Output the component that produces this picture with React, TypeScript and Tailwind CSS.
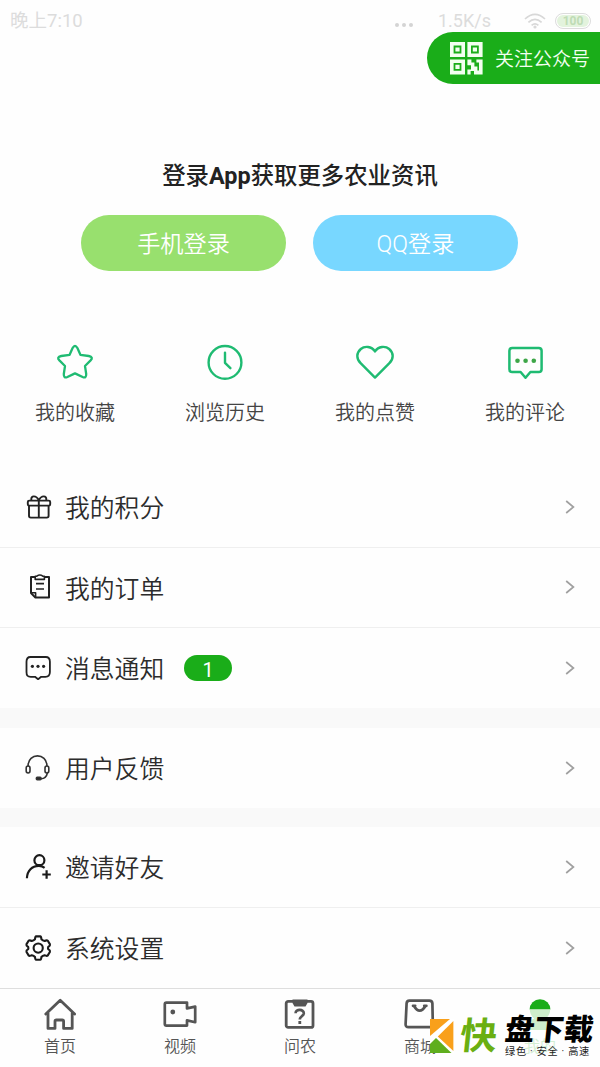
import type { ReactNode } from "react";

const StarIcon = () => (
  <svg viewBox="0 0 40 40" className="w-10 h-10" fill="none" stroke="#1fbb72" strokeWidth={2.3} strokeLinejoin="round">
    <path d="M17.6 6Q20 1.8 22.4 6L25.4 12.8L33.8 14Q38.8 15 35.6 18.4L30 24L31.2 32Q31.4 36.6 27.6 35L20 31.4L12.4 35Q8.6 36.6 8.8 32L10 24L4.4 18.4Q1.2 15 6.2 14L14.6 12.8Z" />
  </svg>
);

const ClockIcon = () => (
  <svg viewBox="0 0 40 40" className="w-10 h-10" fill="none" stroke="#1fbb72" strokeWidth={2.4} strokeLinecap="round">
    <circle cx="20" cy="20.4" r="16.4" />
    <path d="M20 10.6V20.8L25.4 26.2" strokeLinejoin="round" />
  </svg>
);

const HeartIcon = () => (
  <svg viewBox="0 0 40 40" className="w-10 h-10" fill="none" stroke="#1fbb72" strokeWidth={2.4} strokeLinejoin="round">
    <path d="M20 9.4C16.6 4 9.6 3.7 5.8 7C1.2 11 1.2 16.8 5.6 21.2L20 35.6L34.4 21.2C38.8 16.8 38.8 11 34.2 7C30.4 3.7 23.4 4 20 9.4Z" />
  </svg>
);

const CommentIcon = () => (
  <svg viewBox="0 0 40 40" className="w-10 h-10" fill="none" stroke="#1fbb72" strokeWidth={2.5} strokeLinejoin="round">
    <path d="M7.2 6H33.8Q36.6 6 36.6 8.8V27.2Q36.6 30 33.8 30H25.4L20.5 35.8L15.6 30H7.2Q4.4 30 4.4 27.2V8.8Q4.4 6 7.2 6Z" />
    <g fill="#3da648" stroke="none">
      <circle cx="12.5" cy="18.8" r="2.3" />
      <circle cx="20.6" cy="18.8" r="2.3" />
      <circle cx="28.8" cy="18.8" r="2.3" />
    </g>
  </svg>
);

const GiftIcon = () => (
  <svg viewBox="0 0 28 28" className="w-7 h-7" fill="none" stroke="#222" strokeWidth={1.9} strokeLinejoin="round">
    <rect x="3.8" y="7.6" width="22.4" height="5" rx="1.4" />
    <path d="M5 12.6V22.8Q5 24.6 6.8 24.6H22.8Q24.6 24.6 24.6 22.8V12.6M14.8 7.6V24.6M14.8 7.4C12.4 2 6.4 2 7.4 7.4M14.8 7.4C17.2 2 23.2 2 22.2 7.4" />
  </svg>
);

const OrderIcon = () => (
  <svg viewBox="0 0 28 28" className="w-7 h-7" fill="none" stroke="#222" strokeWidth={2} strokeLinejoin="round">
    <path d="M11 4H7V20L11.4 24.6H25V4H20.6" />
    <path d="M11.2 3.2H12.8Q15.8 .9 18.8 3.2H20.4V6.4H11.2Z" strokeWidth={1.6} />
    <path d="M7 19.8H11.6V24.6M12 10.6H20M12 16H20" strokeWidth={1.6} />
  </svg>
);

const MessageIcon = () => (
  <svg viewBox="0 0 28 28" className="w-7 h-7" fill="none" stroke="#222" strokeWidth={1.8} strokeLinejoin="round">
    <path d="M6.4 3H21.8C24.8 3 25.9 4.8 25.9 7.8V18C25.9 21.6 24.6 22.8 21.4 22.8H17.2L14.1 25.2L11 22.8H6.8C3.6 22.8 2.5 21.6 2.5 18V7.8C2.5 4.8 3.4 3 6.4 3Z" />
    <g fill="#222" stroke="none">
      <circle cx="8.4" cy="12.3" r="1.6" />
      <circle cx="14" cy="12.3" r="1.6" />
      <circle cx="19.6" cy="12.3" r="1.6" />
    </g>
  </svg>
);

const HeadsetIcon = () => (
  <svg viewBox="0 0 28 28" className="w-7 h-7" fill="none" stroke="#333" strokeWidth={1.6}>
    <path d="M4 12.2C4.2 -1.6 22.8 -1.6 23 12.2M23.4 18.8Q22.4 24.4 17 24.8" />
    <rect x="2.2" y="12" width="3.8" height="7" rx="1.9" />
    <rect x="21" y="12" width="3.8" height="7" rx="1.9" />
    <rect x="12.4" y="23.4" width="4.6" height="2.2" rx=".8" fill="#222" />
  </svg>
);

const InviteIcon = () => (
  <svg viewBox="0 0 28 28" className="w-7 h-7" fill="none" stroke="#1a1a1a" strokeWidth={2.2}>
    <circle cx="15.4" cy="7.2" r="5" />
    <path d="M2.9 25.2C3.2 17.6 8 12.8 15 12.9Q18.2 13 20.6 14.8M22.6 17.2V25.8M18.3 21.5H26.8" />
  </svg>
);

const GearIcon = () => (
  <svg viewBox="0 0 28 28" className="w-7 h-7" fill="none" stroke="#1a1a1a" strokeWidth={2.1} strokeLinejoin="round">
    <path d="M12.2 2.4H16.2Q17.2 2.6 17.4 5.2Q18.8 6.6 20.6 7Q22.8 5.8 23.8 6.8L26 10.4Q26.4 11.6 24.2 13Q23.8 14.2 24.2 15.2Q26.4 16.6 26 17.8L23.8 21.4Q22.8 22.4 20.6 21.2Q18.6 21.6 17.4 23Q17.2 25.6 16.2 25.8H12.2Q11.2 25.6 11 23Q9.8 21.6 7.8 21.2Q5.6 22.4 4.6 21.4L2.4 17.8Q2 16.6 4.2 15.2Q4.6 14.2 4.2 13Q2 11.6 2.4 10.4L4.6 6.8Q5.6 5.8 7.8 7Q9.6 6.6 11 5.2Q11.2 2.6 12.2 2.4Z" />
    <circle cx="14.2" cy="14.1" r="4.6" />
  </svg>
);

const QrIcon = () => (
  <svg viewBox="0 0 33 33" className="w-[33px] h-[33px]" fill="#f3fff0">
    <path fillRule="evenodd" d="M0 0H15V15H0ZM3.6 3.6V11.4H11.4V3.6ZM17.4 0H32.6V15H17.4ZM21 3.6V11.4H28.8V3.6ZM0 17.4H15V32.4H0ZM3.6 21V28.8H11.4V21Z" />
    <path d="M5.4 5.4H9.6V9.6H5.4ZM22.8 5.4H27V9.6H22.8ZM5.4 22.8H9.6V27H5.4Z" />
    <path d="M17.4 17.4H21.4V20.4H24.4V24.4H27.4V28.6H29V20.4H26.4V17.4H32.6V32.4H24V29H20.6V32.4H17.4V27.4H21V23.2H17.4Z" />
  </svg>
);

const HomeIcon = () => (
  <svg viewBox="0 0 36 36" className="w-9 h-9" fill="none" stroke="#555" strokeWidth={2.8} strokeLinejoin="round" strokeLinecap="round">
    <path d="M3.8 17L18.2 3.2L32.6 17M6 15.8V31.4H13V24.4Q13 23 14.4 23H20.2Q21.6 23 21.6 24.4V31.4H30.2V15.8" />
  </svg>
);

const VideoIcon = () => (
  <svg viewBox="0 0 36 36" className="w-9 h-9" fill="none" stroke="#555" strokeWidth={2.7} strokeLinejoin="round">
    <path d="M4.4 5.6H25V11.4L33.2 9.6V25.2L25 23.4V28.6H4.4Q2.8 28.6 2.8 27V7.2Q2.8 5.6 4.4 5.6Z" />
    <circle cx="10.8" cy="15" r="2.4" fill="#555" stroke="none" />
  </svg>
);

const AskIcon = () => (
  <svg viewBox="0 0 36 36" className="w-9 h-9" fill="none" stroke="#555" strokeWidth={2.8}>
    <rect x="4.2" y="4.4" width="26.8" height="26" rx="2" />
    <path d="M10.5 2.4H25.5V6L23.5 9.4H12.5L10.5 6Z" fill="#555" stroke="none" />
    <path d="M13.6 16.2C13.6 11.7 22 11.9 21.8 16.4C21.6 19.2 17.8 19.4 17.8 22.4" strokeWidth={2.7} />
    <path d="M17.8 24V27" strokeWidth={2.8} />
  </svg>
);

const ShopIcon = () => (
  <svg viewBox="0 0 36 36" className="w-9 h-9" fill="none" stroke="#555" strokeWidth={2.7} strokeLinecap="round">
    <path d="M7.4 3.6H27.4Q30.2 3.6 30.4 6.4L30.8 27Q31 30.2 27.8 30.2H6.6Q3.4 30.2 3.6 27L4.6 6.4Q4.8 3.6 7.4 3.6Z" />
    <path d="M11.8 8.8Q17.7 18.6 23.6 8.8M11 8.8H13.2M22.2 8.8H24.4" />
  </svg>
);

const MineIcon = () => (
  <svg viewBox="0 0 36 36" className="w-9 h-9">
    <path d="M7.6 12.6A10.4 10.4 0 0 1 28.4 12.6Z" fill="#1aad19" />
    <path d="M7.8 12.6H28.2Q28 18.4 23.8 21.4L29.6 24.4V33H6.4V24.4L12.2 21.4Q8 18.4 7.8 12.6Z" fill="#cdeecb" />
  </svg>
);

const Chevron = () => (
  <svg viewBox="0 0 10 14" className="w-[10px] h-[14px]" fill="none" stroke="#a0a0a0" strokeWidth={1.7}>
    <path d="M1.2 1L8.4 7L1.2 13" />
  </svg>
);

const shortcuts = [
  { label: "我的收藏", icon: <StarIcon /> },
  { label: "浏览历史", icon: <ClockIcon /> },
  { label: "我的点赞", icon: <HeartIcon /> },
  { label: "我的评论", icon: <CommentIcon /> },
];

const tabs = [
  { label: "首页", icon: <HomeIcon /> },
  { label: "视频", icon: <VideoIcon /> },
  { label: "问农", icon: <AskIcon /> },
  { label: "商城", icon: <ShopIcon /> },
];

type RowProps = { icon: ReactNode; label: string; badge?: string; line?: boolean };

const Row = ({ icon, label, badge, line }: RowProps) => (
  <a href="#" className={`flex items-center h-[80.3px] pl-6 pr-[25px] ${line ? "border-b border-[#efefef]" : ""}`}>
    {icon}
    <span className="ml-[13px] pt-[5px] text-[24.8px] leading-none font-[350] text-[#2c2c2c]">{label}</span>
    {badge && (
      <span className="ml-5 flex items-center justify-center w-12 h-[26px] pt-[3px] rounded-full bg-[#1aad19] text-[20px] leading-none text-white">{badge}</span>
    )}
    <span className="ml-auto"><Chevron /></span>
  </a>
);

const Watermark = () => (
  <div className="absolute left-[430px] top-[1016px] flex w-[170px] h-10">
    <svg viewBox="0 0 24 36" className="w-6 h-9 mt-[3px] shrink-0">
      <path d="M0 0H24V34H0Z" fill="#fff" />
      <path d="M0 0H20L0 17Z" fill="#f9a01b" />
      <path d="M23.4 2V32L7.8 17.4Z" fill="#f9a01b" />
      <path d="M6 19L21.5 34H0V25Z" fill="#5fae1e" />
    </svg>
    <span className="ml-[6px] mt-px -skew-x-6 text-[37px] leading-[40px] font-bold text-[#6aaf12]">快</span>
    <div className="ml-[8px] flex flex-col">
      <span className="mt-px -skew-x-6 whitespace-nowrap text-[29.5px] leading-[27px] font-black text-black">盘下载</span>
      <span className="mt-[2px] whitespace-nowrap text-[10.2px] leading-[11px] tracking-[0.7px] text-[#222]">绿色 · 安全 · 高速</span>
    </div>
  </div>
);

export default function App() {
  return (
    <div className="relative flex flex-col w-[600px] h-[1067px] overflow-hidden bg-[#fefefe] font-[Roboto,'Noto_Sans_CJK_SC',sans-serif]">
      {/* Status bar */}
      <header className="flex items-center h-8 pt-[10px] pl-[10px] pr-[9px] text-[18.5px] leading-none text-[#dcdcdc]">
        <span>晚上7:10</span>
        <svg viewBox="0 0 18 4" className="ml-auto mt-[7px] w-[18px] h-1" fill="#d4d4d4">
          <circle cx="2" cy="2" r="2" />
          <circle cx="9" cy="2" r="2" />
          <circle cx="16" cy="2" r="2" />
        </svg>
        <span className="ml-[25px] w-[53px] whitespace-nowrap text-[18px]">1.5K/s</span>
        <svg viewBox="0 0 22 16" className="ml-[33px] w-[22px] h-4" fill="none" stroke="#d8d8d8" strokeWidth={1.7}>
          <path d="M1 6Q11 -3.4 21 6M4.4 9.4Q11 3.2 17.6 9.4M7.6 12.4Q11 9.2 14.4 12.4" />
          <circle cx="11" cy="14" r="1.6" fill="#d8d8d8" stroke="none" />
        </svg>
        <span className="ml-[9px] -mt-px flex items-center justify-center w-[36px] h-4 rounded-full border border-[#dcdcdc] p-px">
          <span className="flex items-center justify-center w-full h-full rounded-full bg-[#e3f3dd] text-[12px] font-bold text-[#bfdcb5]">100</span>
        </span>
      </header>

      <a href="#" className="flex items-center self-end w-[173px] h-[52px] pl-[23px] rounded-l-full bg-[#1aad19] text-[19px] leading-none text-[#f3fff0]">
        <QrIcon />
        <span className="ml-3 pt-[2px] whitespace-nowrap font-[350]">关注公众号</span>
      </a>

      {/* Login */}
      <section className="flex flex-col items-center pt-[76px]">
        <h1 className="h-[30px] pt-px text-[23.4px] leading-[30px] font-medium text-[#222]">
          登录<span className="font-bold">App</span>获取更多农业资讯
        </h1>
        <div className="flex gap-[27px] mt-[25px] mr-px">
          <button className="w-[205px] h-14 pt-[2px] rounded-full bg-[#98e06e] text-[23.2px] font-[350] text-white">手机登录</button>
          <button className="w-[205px] h-14 pt-[2px] rounded-full bg-[#78d7ff] text-[23.2px] font-[350] text-white">QQ登录</button>
        </div>
      </section>

      <nav className="grid grid-cols-4 pt-[71px]">
        {shortcuts.map((item) => (
          <a key={item.label} href="#" className="flex flex-col items-center">
            {item.icon}
            <span className="mt-4 h-[30px] text-[20px] leading-[30px] font-[350] text-[#444]">{item.label}</span>
          </a>
        ))}
      </nav>

      {/* Menu list */}
      <div className="flex flex-col mt-[39.5px]">
        <Row icon={<GiftIcon />} label="我的积分" line />
        <Row icon={<OrderIcon />} label="我的订单" line />
        <Row icon={<MessageIcon />} label="消息通知" badge="1" />
        <div className="h-[19.4px] bg-[#f9f9f9]" />
        <Row icon={<HeadsetIcon />} label="用户反馈" />
        <div className="h-[19.4px] bg-[#f9f9f9]" />
        <Row icon={<InviteIcon />} label="邀请好友" line />
        <Row icon={<GearIcon />} label="系统设置" />
      </div>

      {/* Bottom tabs */}
      <footer className="absolute inset-x-0 bottom-0 grid grid-cols-5 h-[79px] border-t border-[#dedede] bg-[#fefefe] pt-2">
        {tabs.map((tab) => (
          <a key={tab.label} href="#" className="flex flex-col items-center">
            {tab.icon}
            <span className="mt-[3px] text-[16px] leading-[22px] font-[350] text-[#555]">{tab.label}</span>
          </a>
        ))}
        <a href="#" className="flex flex-col items-center">
          <MineIcon />
          <span className="mt-[3px] text-[16px] leading-[22px] font-[350] text-[#d3efd2]">我的</span>
        </a>
      </footer>

      <Watermark />
    </div>
  );
}
